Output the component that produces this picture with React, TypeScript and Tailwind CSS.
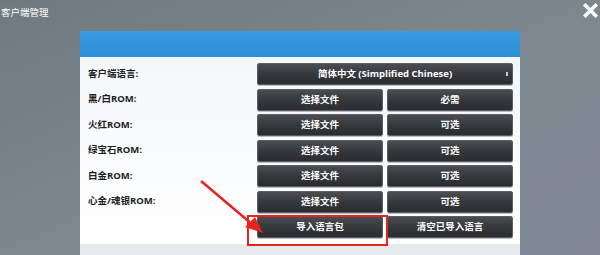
import React from "react";

const Btn = ({ children, className = "" }: { children: React.ReactNode; className?: string }) => (
  <div
    className={
      "relative h-[22px] flex items-center justify-center rounded-[2px] border border-[#5a5d63] bg-gradient-to-b from-[#4a4d52] via-[#35383c] to-[#2a2c30] text-white text-[9.5px] font-bold leading-none shadow-[0_1px_0_rgba(0,0,0,0.25)] " +
      className
    }
  >
    {children}
  </div>
);

const rows: [string, string, string][] = [
  ["黑/白ROM:", "选择文件", "必需"],
  ["火红ROM:", "选择文件", "可选"],
  ["绿宝石ROM:", "选择文件", "可选"],
  ["白金ROM:", "选择文件", "可选"],
  ["心金/魂银ROM:", "选择文件", "可选"],
];

export default function App() {
  return (
    <div
      className="relative w-[600px] h-[255px] overflow-hidden bg-gradient-to-br from-[#6e7a80] via-[#7d888e] to-[#7f8796]"
      style={{ fontFamily: '"Open Sans", "Noto Sans CJK SC", sans-serif' }}
    >
      <div className="flex justify-between h-[31px]">
        <div className="pl-[1px] pt-[6px] text-white text-[9.5px] leading-[14px]">客户端管理</div>
        <div className="pr-[2px] pt-[3px]">
          <svg width="15" height="15" viewBox="0 0 15 15">
            <path d="M2.5 2.5 L12.5 12.5 M12.5 2.5 L2.5 12.5" stroke="#ffffff" strokeWidth="3.6" strokeLinecap="square" />
          </svg>
        </div>
      </div>
      <div className="ml-[80px] w-[440px]">
        <div className="h-[26px] bg-gradient-to-b from-[#3a9be0] to-[#2a8fd6]" />
        <div className="bg-gradient-to-b from-[#f4f7fa] to-[#ffffff] pt-[6px] pb-[6px] pl-[8px] pr-[7px]">
          <div className="grid grid-cols-[165px_126px_126px] gap-x-[4px] gap-y-[3.5px] items-center">
            <div className="text-[9.5px] font-bold text-[#1e1e1e]">客户端语言:</div>
            <Btn className="col-span-2">
              简体中文 (Simplified Chinese)
              <span className="absolute right-[4px] top-[8px] w-[2px] h-[4px] bg-[#c9c9c9]" />
            </Btn>
            {rows.map(([l, a, b]) => (
              <React.Fragment key={l}>
                <div className="text-[9.5px] font-bold text-[#1e1e1e]">{l}</div>
                <Btn>{a}</Btn>
                <Btn>{b}</Btn>
              </React.Fragment>
            ))}
            <div />
            <Btn>导入语言包</Btn>
            <Btn>清空已导入语言</Btn>
          </div>
        </div>
        <div className="h-[20px] bg-[#e5e9ed]" />
      </div>
      <div className="absolute left-[247px] top-[215px] w-[141px] h-[31px] border-2 border-[#e8231d]" />
      <svg className="absolute left-0 top-0" width="600" height="255" viewBox="0 0 600 255">
        <line x1="201" y1="181" x2="253" y2="225" stroke="#e8231d" strokeWidth="2.5" />
        <polygon points="263,233 245,227 255,217" fill="#e8231d" />
      </svg>
    </div>
  );
}
